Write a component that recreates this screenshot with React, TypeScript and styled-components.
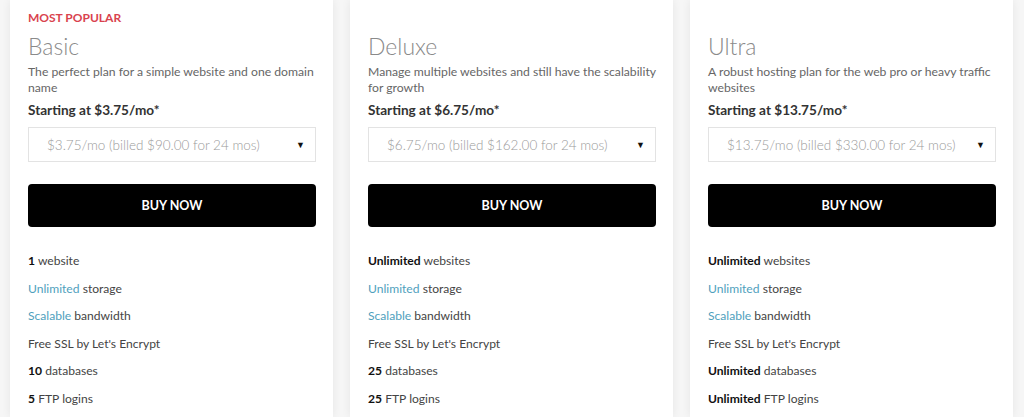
import React from "react";
import styled, { createGlobalStyle } from "styled-components";

const GlobalStyle = createGlobalStyle`
  html, body {
    margin: 0;
    padding: 0;
    background: #f6f6f6;
    font-family: Lato, "Open Sans", Arial, sans-serif;
    -webkit-font-smoothing: antialiased;
  }
`;

interface Feature {
  strong?: string;
  link?: string;
  rest: string;
}

interface Plan {
  badge?: string;
  name: string;
  description: string;
  starting: string;
  billing: string;
  features: Feature[];
}

const plans: Plan[] = [
  {
    badge: "MOST POPULAR",
    name: "Basic",
    description: "The perfect plan for a simple website and one domain name",
    starting: "Starting at $3.75/mo*",
    billing: "$3.75/mo (billed $90.00 for 24 mos)",
    features: [
      { strong: "1", rest: "website" },
      { link: "Unlimited", rest: "storage" },
      { link: "Scalable", rest: "bandwidth" },
      { rest: "Free SSL by Let's Encrypt" },
      { strong: "10", rest: "databases" },
      { strong: "5", rest: "FTP logins" },
    ],
  },
  {
    name: "Deluxe",
    description: "Manage multiple websites and still have the scalability for growth",
    starting: "Starting at $6.75/mo*",
    billing: "$6.75/mo (billed $162.00 for 24 mos)",
    features: [
      { strong: "Unlimited", rest: "websites" },
      { link: "Unlimited", rest: "storage" },
      { link: "Scalable", rest: "bandwidth" },
      { rest: "Free SSL by Let's Encrypt" },
      { strong: "25", rest: "databases" },
      { strong: "25", rest: "FTP logins" },
    ],
  },
  {
    name: "Ultra",
    description: "A robust hosting plan for the web pro or heavy traffic websites",
    starting: "Starting at $13.75/mo*",
    billing: "$13.75/mo (billed $330.00 for 24 mos)",
    features: [
      { strong: "Unlimited", rest: "websites" },
      { link: "Unlimited", rest: "storage" },
      { link: "Scalable", rest: "bandwidth" },
      { rest: "Free SSL by Let's Encrypt" },
      { strong: "Unlimited", rest: "databases" },
      { strong: "Unlimited", rest: "FTP logins" },
    ],
  },
];

const Page = styled.div`
  display: grid;
  grid-template-columns: repeat(3, 1fr);
  column-gap: 17px;
  padding: 0 11px 0 10px;
  height: 417px;
  overflow: hidden;
`;

const Card = styled.div`
  background: #fff;
  box-shadow: 0 0 9px rgba(0, 0, 0, 0.07);
  padding: 9px 17px 0 18px;
  display: flex;
  flex-direction: column;
`;

const Badge = styled.div`
  height: 18px;
  font-size: 12px;
  line-height: 18px;
  font-weight: 700;
  color: #d9434e;
`;

const PlanName = styled.h2`
  margin: 4px 0 0;
  font-size: 23px;
  line-height: 30px;
  font-weight: 300;
  color: #8a8a8a;
`;

const Description = styled.p`
  margin: 3px 0 0;
  font-size: 12.2px;
  line-height: 16px;
  color: #666;
  min-height: 32px;
`;

const Starting = styled.div`
  margin-top: 4px;
  font-size: 13.6px;
  line-height: 20px;
  font-weight: 700;
  color: #333;
`;

const SelectBox = styled.div`
  margin-top: 7px;
  height: 35px;
  box-sizing: border-box;
  border: 1px solid #e3e3e3;
  display: flex;
  align-items: center;
  justify-content: space-between;
  padding: 0 10px 0 18px;
  font-size: 13.5px;
  font-weight: 300;
  color: #9a9a9a;
`;

const Arrow = styled.span`
  font-size: 9px;
  color: #111;
`;

const BuyButton = styled.button`
  margin-top: 22px;
  height: 43px;
  border: none;
  border-radius: 4px;
  background: #000;
  color: #fff;
  font-family: inherit;
  font-size: 12.5px;
  font-weight: 700;
  cursor: pointer;
`;

const FeatureList = styled.ul`
  list-style: none;
  margin: 20px 0 0;
  padding: 0;
`;

const FeatureItem = styled.li`
  font-size: 12.1px;
  line-height: 27.5px;
  color: #444;
`;

const Strong = styled.b`
  font-weight: 700;
  color: #111;
`;

const Link = styled.a`
  color: #4f9fbd;
  text-decoration: none;
`;

const PlanCard = ({ plan }: { plan: Plan }) => (
  <Card>
    <Badge>{plan.badge}</Badge>
    <PlanName>{plan.name}</PlanName>
    <Description>{plan.description}</Description>
    <Starting>{plan.starting}</Starting>
    <SelectBox>
      <span>{plan.billing}</span>
      <Arrow>▼</Arrow>
    </SelectBox>
    <BuyButton>BUY NOW</BuyButton>
    <FeatureList>
      {plan.features.map((f, i) => (
        <FeatureItem key={i}>
          {f.strong && <Strong>{f.strong}</Strong>}
          {f.link && <Link href="#">{f.link}</Link>}
          {(f.strong || f.link) && " "}
          {f.rest}
        </FeatureItem>
      ))}
    </FeatureList>
  </Card>
);

export default function App() {
  return (
    <>
      <GlobalStyle />
      <Page>
        {plans.map((p) => (
          <PlanCard key={p.name} plan={p} />
        ))}
      </Page>
    </>
  );
}
